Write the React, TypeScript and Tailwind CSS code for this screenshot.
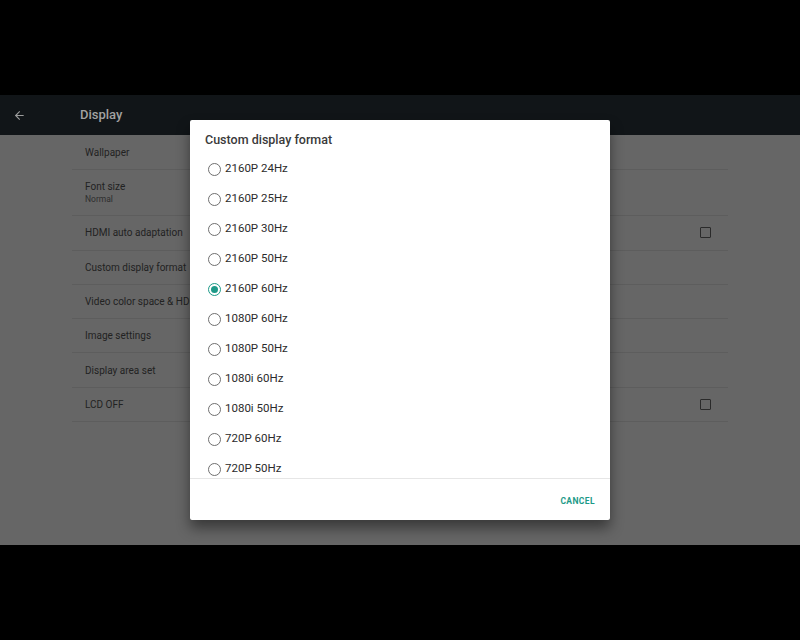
import { ArrowLeft } from "lucide-react";

const settings = [
  { label: "Wallpaper" },
  { label: "Font size", sub: "Normal" },
  { label: "HDMI auto adaptation", check: true },
  { label: "Custom display format" },
  { label: "Video color space & HDR" },
  { label: "Image settings" },
  { label: "Display area set" },
  { label: "LCD OFF", check: true },
];

const formats = [
  "2160P 24Hz",
  "2160P 25Hz",
  "2160P 30Hz",
  "2160P 50Hz",
  "2160P 60Hz",
  "1080P 60Hz",
  "1080P 50Hz",
  "1080i 60Hz",
  "1080i 50Hz",
  "720P 60Hz",
  "720P 50Hz",
];

const Radio = ({ checked }: { checked: boolean }) => (
  <span
    className={`w-[13px] h-[13px] rounded-full border-[1.5px] flex items-center justify-center shrink-0 ${
      checked ? "border-[#1d9a88]" : "border-[#6f6f6f]"
    }`}
  >
    {checked && <span className="w-[7px] h-[7px] rounded-full bg-[#1d9a88]" />}
  </span>
);

export default function App() {
  return (
    <div
      className="w-[800px] h-[640px] bg-black flex flex-col"
      style={{ fontFamily: "Roboto, 'Liberation Sans', sans-serif" }}
    >
      <div className="h-[95px] shrink-0" />

      <div className="relative h-[450px] bg-[#666666] flex flex-col">
        <header className="h-[40px] bg-[#111518] flex items-center shrink-0">
          <ArrowLeft className="ml-[13px] w-[13px] h-[13px] text-[#9c9c9c]" strokeWidth={2} />
          <h1 className="ml-[54px] text-[13px] font-medium text-[#a2a2a2]">Display</h1>
        </header>

        <div className="mx-[72px] pt-[1px]">
          {settings.map((s) => (
            <div
              key={s.label}
              className={`flex items-center border-b border-[#5d5d5d] pl-[13px] pr-[17px] ${
                s.sub ? "h-[46px]" : "h-[34.3px]"
              }`}
            >
              <div className="flex-1">
                <div className="text-[10px] text-[#222222] leading-[13px]">{s.label}</div>
                {s.sub && <div className="text-[8.5px] text-[#2e2e2e] leading-[12px]">{s.sub}</div>}
              </div>
              {s.check && (
                <span className="w-[11px] h-[11px] border-[1.5px] border-[#2a2a2a] rounded-[1px]" />
              )}
            </div>
          ))}
        </div>

        <div className="absolute left-[190px] top-[25px] w-[420px] h-[400px] bg-white rounded-[2px] shadow-[0_8px_14px_rgba(0,0,0,0.45)] flex flex-col">
          <div className="h-[34px] pl-[15px] pt-[12px] shrink-0">
            <h2 className="text-[12.5px] leading-[16px] font-medium text-[#3a3a3a]">
              Custom display format
            </h2>
          </div>
          <div className="h-[325px] overflow-hidden border-b border-[#e6e6e6]">
            {formats.map((f) => (
              <div key={f} className="h-[30px] flex items-center pl-[18px] gap-[4px]">
                <Radio checked={f === "2160P 60Hz"} />
                <span className="text-[11.5px] text-[#2b2b2b]">{f}</span>
              </div>
            ))}
          </div>
          <div className="flex-1 flex items-center justify-end pr-[15px] pt-[3px]">
            <span className="text-[8.5px] font-bold tracking-[0.4px] text-[#1d9a88]">CANCEL</span>
          </div>
        </div>
      </div>

      <div className="flex-1" />
    </div>
  );
}
